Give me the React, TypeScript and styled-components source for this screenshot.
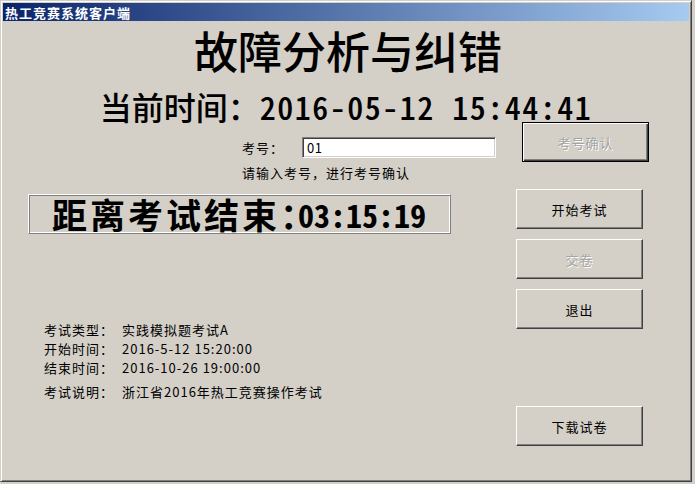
import styled, {createGlobalStyle, css} from 'styled-components'

const GlobalStyle = createGlobalStyle`
  html, body {
    margin: 0;
    padding: 0;
    background: #d4d0c8;
  }
  body {
    font-family: "Noto Sans CJK SC", "Noto Sans", sans-serif;
    font-size: 13px;
    letter-spacing: 1px;
    color: #000;
  }
`

const HALF = css`
  font-feature-settings: "hwid" 1;
`

export const Window = styled.div`
  box-sizing: border-box;
  width: 692px;
  height: 482px;
  padding: 2px;
  border: 1px solid;
  border-color: #d4d0c8 #404040 #404040 #d4d0c8;
  box-shadow: inset 1px 1px #fff, inset -1px -1px #808080;
  background: #d4d0c8;
  display: flex;
  flex-direction: column;
`

export const TitleBar = styled.div`
  height: 18px;
  flex: none;
  display: flex;
  align-items: center;
  padding-left: 2px;
  background: linear-gradient(to right, #0a246a, #a6caf0);
  color: #fff;
  font-weight: 700;
  font-size: 13px;
  letter-spacing: 1px;
`

export const Client = styled.div`
  flex: 1;
  display: flex;
  flex-direction: column;
`

export const Heading = styled.div`
  margin-top: 5px;
  text-align: center;
  font-size: 44px;
  line-height: 48px;
  font-weight: 500;
  letter-spacing: 0;
  padding-left: 4px;
`

export const Clock = styled.div`
  margin-top: 14px;
  text-align: center;
  font-size: 32px;
  line-height: 36px;
  font-weight: 500;
  letter-spacing: 0;
  white-space: pre;
`

export const Digits = styled.span<{$spacing?: number; $size?: number}>`
  letter-spacing: ${p => p.$spacing ?? 1}px;
  ${p => p.$size && `font-size: ${p.$size}px;`}
  ${HALF};
`

export const Body = styled.div`
  margin-top: -2px;
  display: grid;
  grid-template-columns: 513px 132px;
`

export const LeftCol = styled.div`
  display: flex;
  flex-direction: column;
`

export const RightCol = styled.div`
  display: flex;
  flex-direction: column;
  align-items: flex-start;
`

export const IdRow = styled.div`
  margin: 15px 0 0 239px;
  display: flex;
  align-items: center;
  height: 21px;
`

export const IdLabel = styled.span`
  width: 60px;
`

export const IdInput = styled.div`
  box-sizing: border-box;
  width: 194px;
  height: 21px;
  background: #fff;
  border: 1px solid;
  border-color: #808080 #fff #fff #808080;
  box-shadow: inset 1px 1px #404040, inset -1px -1px #d4d0c8;
  padding: 1px 0 0 4px;
  line-height: 17px;
  letter-spacing: 0.5px;
`

export const Hint = styled.div`
  margin: 7px 0 0 239px;
  line-height: 16px;
`

export const CountdownPanel = styled.div`
  box-sizing: border-box;
  margin: 13px 0 0 25px;
  width: 423px;
  height: 40px;
  border: 1px solid;
  border-color: #fff #808080 #808080 #fff;
  box-shadow: inset 1px 1px #808080, inset -1px -1px #fff;
  display: flex;
  align-items: center;
  padding-left: 23px;
  font-size: 35px;
  font-weight: 700;
  line-height: 36px;
  letter-spacing: 3px;
  white-space: pre;
`

export const NarrowColon = styled.span`
  letter-spacing: -17px;
`

export const Info = styled.div`
  margin: 86px 0 0 41px;
  display: flex;
  flex-direction: column;
`

export const InfoRow = styled.div<{$mt: number}>`
  margin-top: ${p => p.$mt}px;
  height: 19px;
  display: flex;
  align-items: center;
`

export const InfoKey = styled.span`
  width: 78px;
`

export const Button = styled.div<{$disabled?: boolean; $default?: boolean; $mt: number; $ml?: number}>`
  box-sizing: border-box;
  width: 127px;
  height: 40px;
  margin-top: ${p => p.$mt}px;
  margin-left: ${p => p.$ml ?? 0}px;
  display: flex;
  align-items: center;
  justify-content: center;
  background: #d4d0c8;
  border: 1px solid;
  border-color: #fff #404040 #404040 #fff;
  box-shadow: inset -1px -1px #808080;
  color: ${p => (p.$disabled ? '#a3a3a3' : '#000')};
  text-shadow: ${p => (p.$disabled ? '1px 1px 0 #fff' : 'none')};
  ${p =>
    p.$default &&
    css`
      border-color: #000;
      box-shadow: inset 1px 1px #fff, inset -1px -1px #404040, inset -2px -2px #808080;
    `}
`

const info: Array<[string, string, number]> = [
  ['考试类型：', '实践模拟题考试A', 0],
  ['开始时间：', '2016-5-12 15:20:00', 0],
  ['结束时间：', '2016-10-26 19:00:00', 0],
  ['考试说明：', '浙江省2016年热工竞赛操作考试', 5],
]

export default function App() {
  return (
    <>
      <GlobalStyle />
      <Window>
        <TitleBar>热工竞赛系统客户端</TitleBar>
        <Client>
          <Heading>故障分析与纠错</Heading>
          <Clock>
            当前时间：<Digits $spacing={1.5}>2016-05-12 15:44:41</Digits>
          </Clock>
          <Body>
            <LeftCol>
              <IdRow>
                <IdLabel>考号：</IdLabel>
                <IdInput>01</IdInput>
              </IdRow>
              <Hint>请输入考号，进行考号确认</Hint>
              <CountdownPanel>
                距离考试结束<NarrowColon>：</NarrowColon>
                <Digits $spacing={0} $size={32}>03:15:19</Digits>
              </CountdownPanel>
              <Info>
                {info.map(([k, v, mt]) => (
                  <InfoRow key={k} $mt={mt}>
                    <InfoKey>{k}</InfoKey>
                    <span>{v}</span>
                  </InfoRow>
                ))}
              </Info>
            </LeftCol>
            <RightCol>
              <Button $default $disabled $mt={0} $ml={6}>考号确认</Button>
              <Button $mt={27}>开始考试</Button>
              <Button $disabled $mt={10}>交卷</Button>
              <Button $mt={10}>退出</Button>
              <Button $mt={77}>下载试卷</Button>
            </RightCol>
          </Body>
        </Client>
      </Window>
    </>
  )
}
